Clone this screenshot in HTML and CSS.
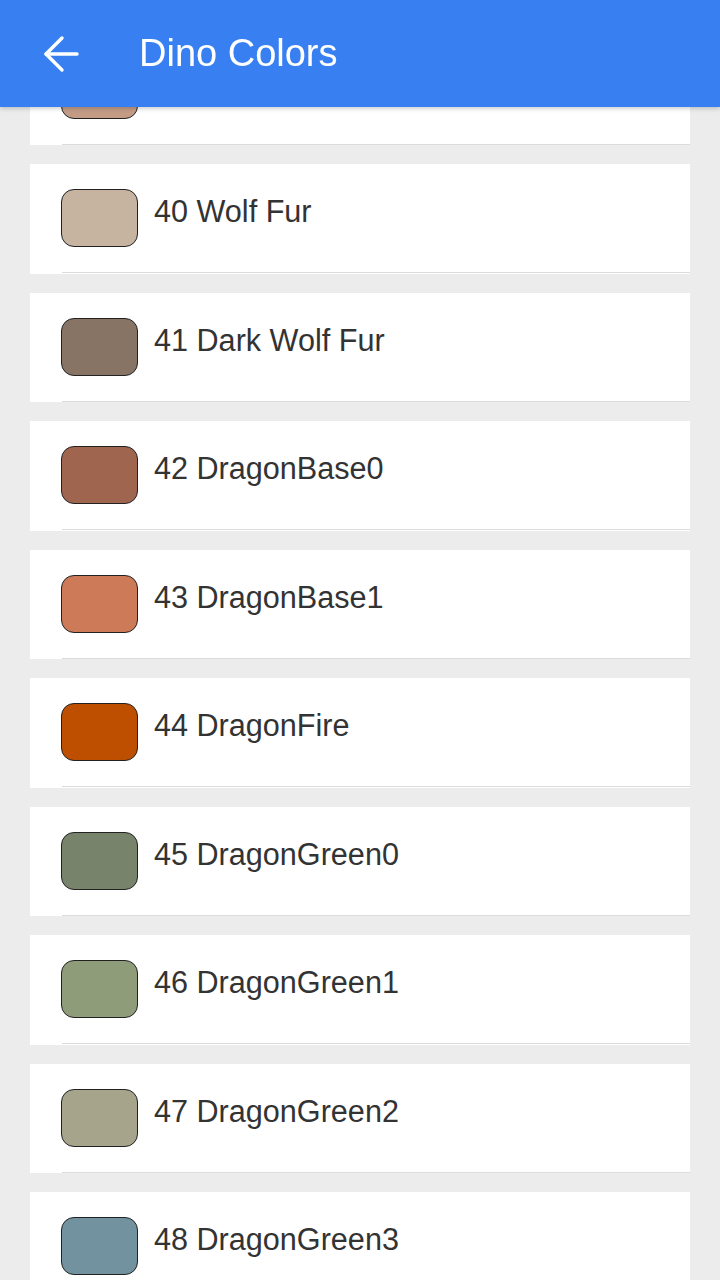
FILE: index.html
```html
<!DOCTYPE html>
<html>
<head>
<meta charset="utf-8">
<link rel="stylesheet" href="styles.css">
</head>
<body>
<header class="toolbar">
  <svg class="back" viewBox="0 0 40 40" width="40" height="40" aria-hidden="true">
    <polyline points="21,4 5,20 21,36" fill="none" stroke="#fff" stroke-width="3.4" stroke-linecap="round" stroke-linejoin="round"/>
    <line x1="5" y1="20" x2="36" y2="20" stroke="#fff" stroke-width="3.4" stroke-linecap="round"/>
  </svg>
  <h1 class="title">Dino Colors</h1>
</header>
<main class="list">
  <div class="card"><div class="item"><span class="swatch" style="background:#c49c86"></span></div></div>
  <div class="card"><div class="item"><span class="swatch" style="background:#c6b4a0"></span><span class="label">40 Wolf Fur</span></div></div>
  <div class="card"><div class="item"><span class="swatch" style="background:#877465"></span><span class="label">41 Dark Wolf Fur</span></div></div>
  <div class="card"><div class="item"><span class="swatch" style="background:#a0654e"></span><span class="label">42 DragonBase0</span></div></div>
  <div class="card"><div class="item"><span class="swatch" style="background:#cd7a58"></span><span class="label">43 DragonBase1</span></div></div>
  <div class="card"><div class="item"><span class="swatch" style="background:#bf4f00"></span><span class="label">44 DragonFire</span></div></div>
  <div class="card"><div class="item"><span class="swatch" style="background:#77836a"></span><span class="label">45 DragonGreen0</span></div></div>
  <div class="card"><div class="item"><span class="swatch" style="background:#8e9c7a"></span><span class="label">46 DragonGreen1</span></div></div>
  <div class="card"><div class="item"><span class="swatch" style="background:#a6a58b"></span><span class="label">47 DragonGreen2</span></div></div>
  <div class="card"><div class="item"><span class="swatch" style="background:#71929e"></span><span class="label">48 DragonGreen3</span></div></div>
</main>
</body>
</html>
```
FILE: styles.css
```css
html, body {
  margin: 0;
  padding: 0;
  height: 100%;
  overflow: hidden;
  background: #ececec;
  font-family: "Liberation Sans", Arial, sans-serif;
}

.toolbar {
  position: fixed;
  top: 0;
  left: 0;
  right: 0;
  height: 107px;
  background: #3880f2;
  display: flex;
  align-items: center;
  box-shadow: 0 2px 4px rgba(0, 0, 0, 0.18);
  z-index: 10;
}

.back {
  margin-left: 41px;
  margin-top: 1px;
  flex: none;
}

.title {
  margin: 0 0 0 58px;
  color: #fff;
  font-size: 38px;
  font-weight: 400;
  line-height: 44px;
  margin-top: -2px;
}

.list {
  padding-top: 35.5px;
}

.card {
  background: #fff;
  margin: 0 30px 19px;
  height: 109.5px;
}

.item {
  margin-left: 32px;
  height: 108px;
  border-bottom: 1px solid #dcdcdc;
  display: flex;
  align-items: flex-start;
}

.swatch {
  flex: none;
  box-sizing: border-box;
  width: 77px;
  height: 58px;
  margin-top: 25px;
  margin-left: -1px;
  border: 1.6px solid #222;
  border-radius: 13px;
}

.label {
  margin-left: 16px;
  margin-top: 29px;
  font-size: 30.6px;
  line-height: 36px;
  color: #333;
}
```
